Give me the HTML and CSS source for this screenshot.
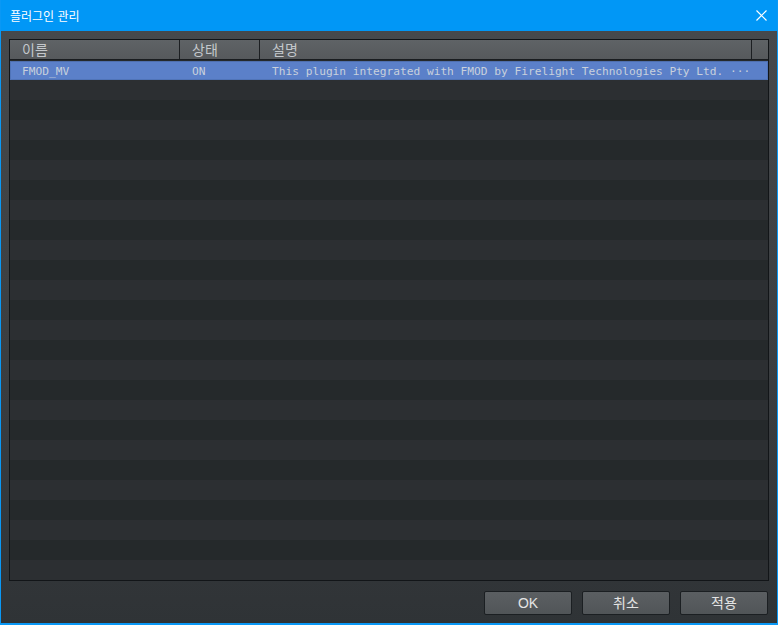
FILE: index.html
```html
<!DOCTYPE html>
<html lang="ko">
<head>
<meta charset="utf-8">
<title>플러그인 관리</title>
<link rel="stylesheet" href="styles.css">
</head>
<body>
<div class="window">
  <div class="titlebar">
    <span class="title">플러그인 관리</span>
    <svg class="close" width="11" height="11" viewBox="0 0 11 11"><path d="M0.5 0.5 L10.5 10.5 M10.5 0.5 L0.5 10.5" stroke="#ffffff" stroke-width="1.2" fill="none"/></svg>
  </div>
  <div class="content">
    <div class="table">
      <div class="header">
        <div class="hcell">이름</div>
        <div class="hcell">상태</div>
        <div class="hcell">설명</div>
        <div class="hcell last"></div>
      </div>
      <div class="rows">
        <div class="row selected">
          <div class="cell first">FMOD_MV</div>
          <div class="cell">ON</div>
          <div class="cell desc">This plugin integrated with FMOD by Firelight Technologies Pty Ltd. ···</div>
          <div class="cell"></div>
        </div>
      </div>
    </div>
    <div class="buttons">
      <button class="btn">OK</button>
      <button class="btn">취소</button>
      <button class="btn">적용</button>
    </div>
  </div>
</div>
</body>
</html>
```

FILE: styles.css
```css
html, body {
  margin: 0;
  padding: 0;
  width: 778px;
  height: 625px;
  overflow: hidden;
  background: #0197f6;
}
.window {
  box-sizing: border-box;
  width: 778px;
  height: 625px;
  display: flex;
  flex-direction: column;
  border-left: 1px solid #0a98f5;
  border-right: 1px solid #0a98f5;
  border-bottom: 2px solid #0a98f5;
  font-family: "Noto Sans CJK KR", "Noto Sans", sans-serif;
}
.titlebar {
  height: 31px;
  flex: none;
  background: #0197f6;
  display: flex;
  align-items: center;
  justify-content: space-between;
  padding: 0 10px 0 9px;
  box-sizing: border-box;
}
.title {
  color: #ffffff;
  font-size: 12px;
  line-height: 31px;
  margin-top: -1px;
}
.close {
  display: block;
  margin-top: -1px;
}
.content {
  flex: 1;
  display: flex;
  flex-direction: column;
  padding: 8px 8px 8px 8px;
  background: linear-gradient(to bottom, #46494c 0%, #3a3d40 60%, #2f3336 100%);
}
.table {
  box-sizing: border-box;
  height: 542px;
  flex: none;
  border: 1px solid #121518;
  display: flex;
  flex-direction: column;
  overflow: hidden;
}
.header {
  display: grid;
  grid-template-columns: 170px 80px 492px 16px;
  height: 20px;
  flex: none;
  box-sizing: border-box;
  border-bottom: 1px solid #1a1d20;
  background: linear-gradient(to bottom, #5f6366, #56595c);
}
.hcell {
  box-sizing: border-box;
  border-right: 1px solid #1c1f22;
  padding-left: 12px;
  color: #c4c8cc;
  font-size: 14px;
  line-height: 19px;
  white-space: nowrap;
}
.hcell.last {
  border-right: none;
}
.rows {
  flex: 1;
  background: repeating-linear-gradient(to bottom, #25292b 0, #25292b 20px, #2c2f32 20px, #2c2f32 40px);
}
.row {
  display: grid;
  grid-template-columns: 170px 80px 492px 16px;
  height: 20px;
  box-sizing: border-box;
}
.row.selected {
  height: 19px;
  margin-top: 1px;
  background: #5b80c9;
  border: 1px solid #5074b8;
  border-top-color: #4f6fae;
  grid-template-columns: 169px 80px 492px 15px;
}
.cell {
  padding-left: 12px;
  color: #c8d0dc;
  font-family: "DejaVu Sans Mono", monospace;
  font-size: 11.2px;
  line-height: 19px;
  white-space: nowrap;
}
.cell.first {
  padding-left: 11px;
}
.cell.desc {
  overflow: visible;
}
.buttons {
  display: flex;
  justify-content: flex-end;
  gap: 10px;
  margin-top: 10px;
  padding-right: 1px;
}
.btn {
  box-sizing: border-box;
  width: 88px;
  height: 24px;
  margin: 0;
  padding: 0;
  border: 1px solid #1b1f22;
  border-radius: 2px;
  background: linear-gradient(to bottom, #5b5f62, #515558);
  color: #e4e4e4;
  font-family: "Liberation Sans", "Noto Sans CJK KR", sans-serif;
  font-size: 14px;
  line-height: 22px;
}
```
